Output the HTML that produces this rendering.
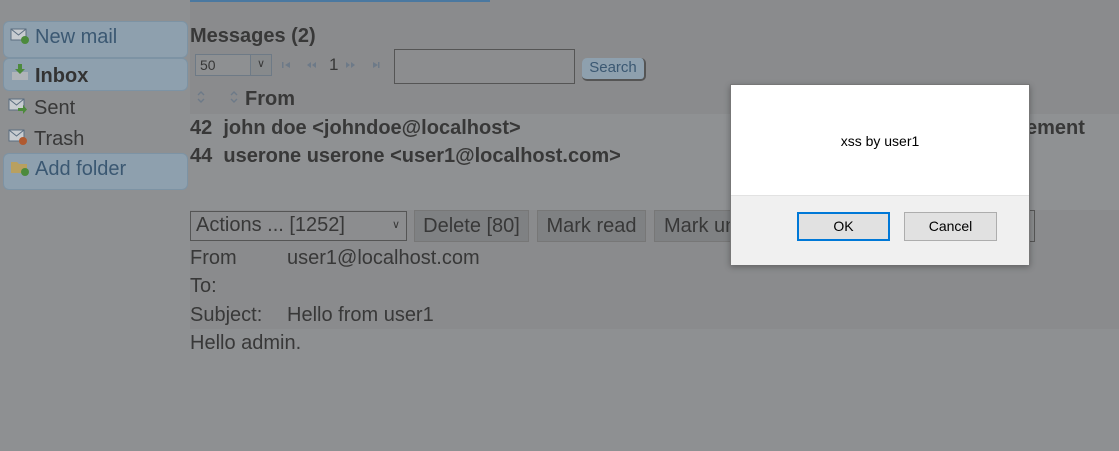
<!DOCTYPE html>
<html><head><style>
*{margin:0;padding:0;box-sizing:border-box}
body{width:1119px;height:451px;background:#8a8b8d;font-family:"Liberation Sans",sans-serif;color:#383838;position:relative;overflow:hidden}
.abs{position:absolute;white-space:nowrap}
.side{left:0;top:0;width:190px;height:451px;background:#8e9092}
.sb{left:3px;width:185px;height:37px;border:1px solid #7d93a4;border-radius:6px;background:#8ea0ae;font-size:20px;color:#3b5872}
.ico{position:absolute;left:6px;width:20px;height:18px}
.bold{font-weight:bold}
</style></head><body>
<div class="abs" style="left:138px;top:0;width:352px;height:2px;background:#4a78a0"></div>
<div class="abs side"></div>
<div class="abs sb" style="top:21px"><svg class="ico" style="top:5px" viewBox="0 0 20 18"><rect x="1" y="2" width="15" height="11" fill="#c8ccd0" stroke="#5c6e80"/><path d="M1 2l7.5 6 7.5-6" fill="none" stroke="#5c6e80"/><circle cx="15" cy="13" r="4" fill="#4c8a3c"/></svg><span class="abs" style="left:31px;top:4px">New mail</span></div>
<div class="abs sb" style="top:58px;height:33px"><svg class="ico" style="top:4px" viewBox="0 0 20 18"><rect x="2" y="9" width="16" height="8" fill="#b0b4b8"/><path d="M8 1h4v5h3l-5 5-5-5h3z" fill="#4c8a3c"/></svg><span class="abs bold" style="left:31px;top:6px;color:#333">Inbox</span></div>
<svg class="abs" style="left:8px;top:97px" width="20" height="18" viewBox="0 0 20 18"><rect x="1" y="2" width="15" height="11" fill="#c8ccd0" stroke="#5c6e80"/><path d="M1 2l7.5 6 7.5-6" fill="none" stroke="#5c6e80"/><path d="M10 11h5v-3l4 4.5-4 4.5v-3h-5z" fill="#4c8a3c"/></svg>
<div class="abs" style="left:34px;top:97px;font-size:20px">Sent</div>
<svg class="abs" style="left:8px;top:128px" width="20" height="18" viewBox="0 0 20 18"><rect x="1" y="2" width="15" height="11" fill="#c8ccd0" stroke="#5c6e80"/><path d="M1 2l7.5 6 7.5-6" fill="none" stroke="#5c6e80"/><circle cx="15" cy="13" r="4" fill="#b05a30"/></svg>
<div class="abs" style="left:34px;top:128px;font-size:20px">Trash</div>
<div class="abs sb" style="top:153px"><svg class="ico" style="top:5px" viewBox="0 0 20 18"><path d="M1 3h6l2 2h8v9H1z" fill="#b8a060"/><circle cx="15" cy="13" r="4" fill="#4c8a3c"/></svg><span class="abs" style="left:31px;top:4px">Add folder</span></div>

<div class="abs bold" style="left:190px;top:25px;font-size:20px">Messages (2)</div>
<div class="abs" style="left:195px;top:54px;width:77px;height:22px;border:1px solid #6e7a86;background:#8e9092;font-size:14px;padding:2px 4px">50</div>
<div class="abs" style="left:250px;top:55px;width:21px;height:20px;background:#878a8c;border-left:1px solid #6e7a86;font-size:11px;text-align:center;line-height:18px">&#8744;</div>
<svg class="abs" style="left:280px;top:60px" width="110" height="10" viewBox="0 0 110 10" fill="#6d7a88"><rect x="2" y="2" width="1.5" height="6"/><path d="M10 2v6l-5-3z"/><path d="M31 2v6l-4-3zM36 2v6l-4-3z"/><path d="M66 2v6l4-3zM71 2v6l4-3z"/><path d="M93 2v6l5-3z"/><rect x="98" y="2" width="1.5" height="6"/></svg>
<div class="abs" style="left:329px;top:55px;font-size:17px">1</div>
<div class="abs" style="left:394px;top:49px;width:181px;height:35px;border:1px solid #555;background:#8c8d8f"></div>
<div class="abs" style="left:582px;top:58px;width:64px;height:23px;border-radius:5px;background:#8ea0ae;border-right:2px solid #555;border-bottom:2px solid #555;font-size:15px;color:#3b5872;text-align:center;line-height:20px">Search</div>
<svg class="abs" style="left:196px;top:90px" width="10" height="14" viewBox="0 0 10 14" fill="none" stroke="#6d7a88" stroke-width="1.4"><path d="M2 5l3-3 3 3M2 9l3 3 3-3"/></svg>
<svg class="abs" style="left:229px;top:90px" width="10" height="14" viewBox="0 0 10 14" fill="none" stroke="#6d7a88" stroke-width="1.4"><path d="M2 5l3-3 3 3M2 9l3 3 3-3"/></svg>
<div class="abs bold" style="left:245px;top:88px;font-size:20px">From</div>
<div class="abs" style="left:190px;top:114px;width:929px;height:96px;background:#8f9193"></div>
<div class="abs bold" style="left:190px;top:117px;font-size:20px">42&nbsp; john doe &lt;johndoe@localhost&gt;</div>
<div class="abs bold" style="left:190px;top:145px;font-size:20px">44&nbsp; userone userone &lt;user1@localhost.com&gt;</div>
<div class="abs bold" style="left:1026px;top:117px;font-size:20px">ement</div>

<div class="abs" style="left:190px;top:211px;width:217px;height:30px;border:1px solid #555;background:#8c8d8f;font-size:20px;padding:2px 5px">Actions ... [1252]<span style="position:absolute;right:6px;top:6px;font-size:11px">&#8744;</span></div>
<div class="abs" style="left:414px;top:210px;width:115px;height:32px;background:#7f8183;border:1px solid #777;font-size:20px;text-align:center;line-height:30px">Delete [80]</div>
<div class="abs" style="left:537px;top:210px;width:109px;height:32px;background:#7f8183;border:1px solid #777;font-size:20px;text-align:center;line-height:30px">Mark read</div>
<div class="abs" style="left:654px;top:210px;width:120px;height:32px;background:#7f8183;border:1px solid #777;font-size:20px;line-height:30px;padding-left:9px;overflow:hidden">Mark unread</div>
<div class="abs" style="left:1000px;top:210px;width:35px;height:32px;border:1px solid #555;border-left:none"></div>
<div class="abs" style="left:190px;top:247px;font-size:20px">From</div>
<div class="abs" style="left:287px;top:247px;font-size:20px">user1@localhost.com</div>
<div class="abs" style="left:190px;top:275px;font-size:20px">To:</div>
<div class="abs" style="left:190px;top:304px;font-size:20px">Subject:</div>
<div class="abs" style="left:287px;top:304px;font-size:20px">Hello from user1</div>
<div class="abs" style="left:190px;top:329px;width:929px;height:122px;background:#8e9092"></div>
<div class="abs" style="left:190px;top:332px;font-size:20px">Hello admin.</div>

<div class="abs" style="left:730px;top:84px;width:300px;height:181px;background:#fff;border:1px solid #777;box-shadow:0 2px 6px rgba(0,0,0,.3)">
<div class="abs" style="left:0;top:48px;width:298px;text-align:center;font-size:14px;color:#000">xss by user1</div>
<div class="abs" style="left:0;top:110px;width:298px;height:70px;background:#f0f0f0;border-top:1px solid #e2e2e2"></div>
<div class="abs" style="left:66px;top:127px;width:93px;height:29px;background:#e1e1e1;border:2px solid #0078d7;font-size:14px;color:#000;text-align:center;line-height:25px">OK</div>
<div class="abs" style="left:173px;top:127px;width:93px;height:29px;background:#e1e1e1;border:1px solid #adadad;font-size:14px;color:#000;text-align:center;line-height:27px">Cancel</div>
</div>
</body></html>
